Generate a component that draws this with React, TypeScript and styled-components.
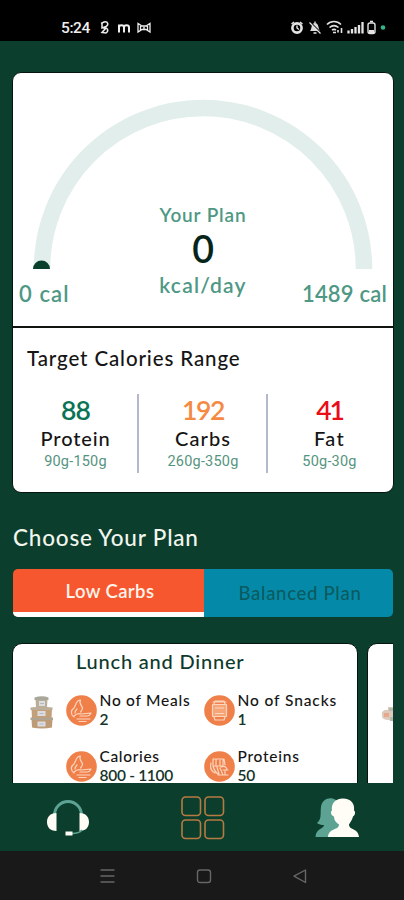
import React from "react";
import styled, { createGlobalStyle } from "styled-components";

const Global = createGlobalStyle`
  * { box-sizing: border-box; }
  body { margin: 0; background: #0b3e2c; font-family: Lato, sans-serif; font-weight: 500; }
`;

const Screen = styled.div`
  width: 404px;
  height: 900px;
  display: flex;
  flex-direction: column;
  overflow: hidden;
  background: #0b3e2c;
`;

const StatusBar = styled.header`
  height: 41px;
  flex: none;
  display: flex;
  justify-content: space-between;
  padding: 18px 17px 0 61px;
  background: #000;
  color: #eee;
`;

const Clock = styled.span`
  font: 500 15.5px/20px Roboto, sans-serif;
  letter-spacing: -0.4px;
  margin-right: 9px;
`;

const StatusGroup = styled.div`
  display: flex;
`;

const Main = styled.main`
  flex: 1;
  min-height: 0;
  overflow: hidden;
  padding: 31px 11px 0 12px;
`;

const Text = styled.div<{ $size: number; $line: number; $gap?: number; $color?: string; $weight?: number }>`
  font-size: ${(p) => p.$size}px;
  line-height: ${(p) => p.$line}px;
  letter-spacing: ${(p) => p.$gap ?? 0}px;
  color: ${(p) => p.$color ?? "#151515"};
  font-weight: ${(p) => p.$weight ?? 500};
  white-space: nowrap;
`;

const SummaryCard = styled.section`
  height: 421px;
  width: 382px;
  background: #fff;
  border: 1px solid #06160f;
  border-radius: 9px;
  overflow: hidden;
`;

const Gauge = styled.div`
  display: grid;
  height: 253px;
  > * { grid-area: 1 / 1; }
`;

const GaugeCenter = styled.div`
  padding-top: 130px;
  text-align: center;
`;

const GaugeEnds = styled.div`
  align-self: end;
  display: flex;
  justify-content: space-between;
  padding: 0 6px 18px;
`;

const TargetPanel = styled.div`
  border-top: 2px solid #10160f;
  padding-top: 16px;
`;

const TargetTitle = styled(Text)`
  padding-left: 14px;
`;

const Stats = styled.div`
  display: grid;
  grid-template-columns: 126px 129px 1fr;
  margin-top: 22px;
  height: 79px;
`;

const Stat = styled.div`
  text-align: center;
  padding: 1px 0 0 1px;
  border-right: 2px solid #b4b8cc;
  &:last-child { border-right: 0; padding-right: 3px; }
`;

const Range = styled.div`
  font: 400 14.5px/20px Roboto, sans-serif;
  letter-spacing: 0.2px;
  padding-top: 1px;
  color: #56947f;
`;

const SectionTitle = styled(Text)`
  margin: 31px 0 0 1px;
`;

const Tabs = styled.div`
  display: grid;
  grid-template-columns: 191px 1fr;
  height: 48px;
  width: 380px;
  margin: 17px 0 0 1px;
  border-radius: 5px;
  overflow: hidden;
`;

const Tab = styled.button<{ $active?: boolean }>`
  border: 0;
  border-bottom: ${(p) => (p.$active ? "5px solid #fff" : "0")};
  padding: 0 0 0 3px;
  background: ${(p) => (p.$active ? "#f6572e" : "#048aa8")};
  color: ${(p) => (p.$active ? "#fff3ea" : "#0b5a60")};
  font: ${(p) => (p.$active ? 600 : 500)} 18.5px Lato, sans-serif;
  letter-spacing: ${(p) => (p.$active ? 0.4 : 0.7)}px;
`;

const Plans = styled.div`
  display: flex;
  gap: 9px;
  width: 381px;
  margin-top: 26px;
  overflow: hidden;
`;

const PlanCard = styled.article`
  flex: none;
  width: 346px;
  height: 180px;
  background: #fff;
  border: 1px solid #06160f;
  border-radius: 10px;
`;

const PlanTitle = styled(Text)`
  padding: 4px 0 0 63px;
`;

const PlanBody = styled.div`
  display: grid;
  grid-template-columns: 36px 138px 1fr;
  padding: 17px 0 0 17px;
`;

const NextBody = styled.div`
  padding: 58px 0 0 13px;
`;

const Facts = styled.div`
  display: grid;
  gap: 18px;
`;

const Fact = styled.div`
  display: flex;
  gap: 2.5px;
  height: 38px;
  > svg { margin-top: 4px; flex: none; }
`;

const NavBar = styled.nav`
  height: 68px;
  flex: none;
  display: flex;
  justify-content: space-between;
  padding: 13px 45px 0 46px;
`;

const SystemBar = styled.footer`
  height: 49px;
  flex: none;
  display: flex;
  justify-content: space-between;
  padding: 16px 96px 0 99px;
  background: #191919;
`;

const GREEN = "#4f9885";

const MealIcon = () => (
  <g>
    <path d="M8 22c-4-3-3-7 0-9l1.500-3c1-3 3-5 5-5-2 3 1 5 2 8 0 2-1 3-2 4" />
    <path d="M9 18c0-2 1-3 2-4M8 21c2-2 4-3 7-2l10-1c-1 2-2 3-4 3h-7M11 24h13M13 26.500h7" />
  </g>
);
const SnackIcon = () => (
  <g>
    <rect x="8.500" y="9.500" width="14" height="12" rx="0.500" fill="#f5a577" />
    <path d="M9 7h13M10 9l1-3h9l1 3M10 22l1 3h9l1-3M11.500 13h8M11.500 18.500h8" />
  </g>
);
const ProteinIcon = () => (
  <g>
    <path d="M9 8h10v7H9zM12 8v7M16 9v5M7 12c-1 4 0 8 4 10M9 15c1 4 2 6 5 8M13 16l2 7M17 16c4-2 6 1 6 3M16 17l3 7M14 24h10M19 19h5M20 8l1 6M21 19v5" />
  </g>
);

const Disc = ({ children }: { children: React.ReactNode }) => (
  <svg width="31" height="31" viewBox="0 0 31 31" fill="none" stroke="#fbd5bd" strokeWidth="1.2" strokeLinecap="round" strokeLinejoin="round">
    <circle cx="15.5" cy="15.5" r="15.3" fill="#f0804a" stroke="none" />
    {children}
  </svg>
);

const Boxes = () => (
  <svg width="24" height="34" viewBox="0 0 24 34">
    <path d="M5.500 3h12l-.5 10H6z" fill="#b9ae98" />
    <path d="M4.500 2.500Q12 0 18.500 2.500V5h-14z" fill="#a9a79a" />
    <path d="M1.500 13.500h20.500l-.5 10h-19.500z" fill="#c3a078" />
    <path d="M.5 12.500Q12 11 22.500 12.500V15H.5z" fill="#bcae99" />
    <path d="M1.500 24h21l-.5 8.500q-10 2-20 0z" fill="#bd9b76" />
    <path d="M.5 22.500h22.500V25H.5z" fill="#b0a390" />
    <path d="M9 6h6v5H9zM7.500 16h8v5h-8zM7.500 26.500h8v5h-8z" fill="#dcdde0" />
    <path d="M10 8.500h4M9.500 18.500h4M9.500 29h4" stroke="#b4b8c0" />
  </svg>
);

const FACTS: { name: string; value: string; gap: number; icon: React.ReactNode }[][] = [
  [
    { name: "No of Meals", value: "2", gap: 0.75, icon: <MealIcon /> },
    { name: "Calories", value: "800 - 1100", gap: 0.65, icon: <MealIcon /> },
  ],
  [
    { name: "No of Snacks", value: "1", gap: 0.9, icon: <SnackIcon /> },
    { name: "Proteins", value: "50", gap: 0.75, icon: <ProteinIcon /> },
  ],
];

const STATS = [
  { value: "88", name: "Protein", range: "90g-150g", color: "#0b7355", gap: -0.9, nameGap: 0.85 },
  { value: "192", name: "Carbs", range: "260g-350g", color: "#f58a43", gap: -1.4, nameGap: 1.1 },
  { value: "41", name: "Fat", range: "50g-30g", color: "#ea0c16", gap: -2.2, nameGap: 1.3 },
];

export default function App() {
  return (
    <Screen>
      <Global />
      <StatusBar>
        <StatusGroup>
          <Clock>5:24</Clock>
          <svg width="54" height="20" viewBox="0 0 54 20" fill="none" stroke="#eee" strokeWidth="1.5">
            <path d="M2 5.500l3-1.500c4-1 5 3 2 4.500l-4 1.500V5.500M4 10c5-1 6 3 3 5l-4-.5 4-4.500" />
            <path d="M20 14.500V6.500M20 9.500c0-3 5-3 5 0v5M25 9.500c0-3 5-3 5 0v5" strokeWidth="2" />
            <path d="M39 5.500v8.500l4-2.500h4l4 2.500V5.500L47 8h-4zM41.500 8v4M48.500 8v4M44 9.800h2" strokeWidth="1.300" />
          </svg>
        </StatusGroup>
        <svg width="98" height="20" viewBox="0 0 98 20" fill="none" stroke="#e4e4e4">
          <circle cx="8" cy="10" r="4.600" strokeWidth="2.600" />
          <path d="M8 7.500V10l2 1.500M2.500 6l2.500-2M13.500 6L11 4" strokeWidth="1.400" />
          <path d="M21 13c2-2 1-8 5-8s3 6 5 8z" fill="#ddd" stroke="none" />
          <path d="M24.500 15h3M26 3.500V5" strokeWidth="1.400" />
          <path d="M21 4l11 11" stroke="#000" strokeWidth="1.600" />
          <path d="M20.500 4.500l11 11" strokeWidth="1.200" />
          <path d="M38 6.500c4-4 10-4 14 0M40.500 9.500c3-2.500 6-2.500 9 0M43 12c1.500-1 2.500-1 4 0M44 14.500h3M49 14.500v-2.500M52.500 15v-5" strokeWidth="1.600" />
          <path d="M59.500 15.500v-3M63 15.500v-4.500M66.500 15.500v-6.500M70 15.500v-8.500M73.500 15.500V4" strokeWidth="2.300" />
          <rect x="79" y="5" width="7" height="10.500" rx="2" strokeWidth="1.400" />
          <path d="M81 3.500h3" strokeWidth="1.600" />
          <path d="M80 12h5v3h-5z" fill="#e4e4e4" stroke="none" />
          <circle cx="94" cy="9.500" r="2.300" fill="#35b48b" stroke="none" />
        </svg>
      </StatusBar>

      <Main>
        <SummaryCard>
          <Gauge>
            <svg width="380" height="196" viewBox="0 0 380 196">
              <path d="M29 196a161 161 0 0 1 322 0" fill="none" stroke="#e1eeeb" strokeWidth="16.500" />
              <circle cx="28.500" cy="196" r="8.500" fill="#08402b" />
            </svg>
            <GaugeCenter>
              <Text $size={19} $line={24} $gap={0.85} $weight={600} $color={GREEN}>Your Plan</Text>
              <Text $size={37.5} $line={44} $weight={600} $color="#06251a">0</Text>
              <Text $size={21} $line={28} $gap={1.2} $weight={600} $color={GREEN}>kcal/day</Text>
            </GaugeCenter>
            <GaugeEnds>
              <Text $size={22} $line={28} $gap={1.1} $weight={600} $color={GREEN}>0 cal</Text>
              <Text $size={22} $line={28} $gap={0.2} $weight={600} $color={GREEN}>1489 cal</Text>
            </GaugeEnds>
          </Gauge>
          <TargetPanel>
            <TargetTitle $size={20.5} $line={28} $gap={0.88}>Target Calories Range</TargetTitle>
            <Stats>
              {STATS.map((s) => (
                <Stat key={s.name}>
                  <Text $size={26.5} $line={30} $gap={s.gap} $weight={600} $color={s.color}>{s.value}</Text>
                  <Text $size={20} $line={26} $gap={s.nameGap}>{s.name}</Text>
                  <Range>{s.range}</Range>
                </Stat>
              ))}
            </Stats>
          </TargetPanel>
        </SummaryCard>

        <SectionTitle $size={22.5} $line={28} $gap={0.8} $weight={500} $color="#f2f6ef">Choose Your Plan</SectionTitle>
        <Tabs>
          <Tab $active>Low Carbs</Tab>
          <Tab>Balanced Plan</Tab>
        </Tabs>

        <Plans>
          <PlanCard>
            <PlanTitle $size={20} $line={26} $gap={0.8} $color="#0d3a2c">Lunch and Dinner</PlanTitle>
            <PlanBody>
              <Fact><Boxes /></Fact>
              {FACTS.map((column) => (
                <Facts key={column[0].name}>
                  {column.map((f) => (
                    <Fact key={f.name}>
                      <Disc>{f.icon}</Disc>
                      <div>
                        <Text $size={15.5} $line={19} $gap={f.gap}>{f.name}</Text>
                        <Text $size={15.5} $line={19} $gap={-0.3} $weight={600} $color="#15352a">{f.value}</Text>
                      </div>
                    </Fact>
                  ))}
                </Facts>
              ))}
            </PlanBody>
          </PlanCard>
          <PlanCard>
            <NextBody>
              <svg width="24" height="26" viewBox="0 0 24 26">
                <path d="M1 10q3-3 6-2V5h14v15q-10 0-13-2-7 0-7-4z" fill="#dccabc" />
                <path d="M3 11h5v4H3z" fill="#e7a88c" />
                <path d="M8 6h5v3H8zM9 15h4v4H9z" fill="#b8b9ae" />
              </svg>
            </NextBody>
          </PlanCard>
        </Plans>
      </Main>

      <NavBar>
        <svg width="44" height="44" viewBox="0 0 44 44">
          <path d="M8.500 19a13.500 13.500 0 0 1 27 0" fill="none" stroke="#5da393" strokeWidth="3" />
          <path d="M10.500 17v18C4 35 1 31 1 26s3-9 9.500-9zM33.500 17v18c6.500 0 9.500-4 9.500-9s-3-9-9.500-9z" fill="#fffdf5" />
          <path d="M36 34q-3 3.500-10 3.500" fill="none" stroke="#5da393" strokeWidth="1.700" />
          <rect x="19.500" y="35.500" width="7" height="4" fill="#fffdf5" />
        </svg>
        <svg width="44" height="44" viewBox="0 0 44 44" fill="none" stroke="#b67b43" strokeWidth="1.600">
          <rect x="1" y="1" width="18.500" height="18.500" rx="3.500" />
          <rect x="24" y="1" width="18.500" height="18.500" rx="3.500" />
          <rect x="1" y="24" width="18.500" height="18.500" rx="3.500" />
          <rect x="24" y="24" width="18.500" height="18.500" rx="3.500" />
        </svg>
        <svg width="44" height="44" viewBox="0 0 44 44">
          <path d="M21 4c-6-4-14-1-15 7-1 7 1 12-4 16 2 1.500 4 2 7 2 0 4-8 3-8.500 12H26z" fill="#5da393" />
          <path d="M28 2.500c8 0 12 5 11 12 2 1 1 5-1 6-1 4-3 6-4 8 0 6 9 3 10 12.500H13c1-9.500 11-6.500 11-12.500-3-2-5-4-5-8-3-1-4-5-2-6-1-7 3-12 11-12z" fill="#fffdf5" />
        </svg>
      </NavBar>
      <SystemBar>
        <svg width="17" height="18" viewBox="0 0 17 18" stroke="#666" strokeWidth="1.400">
          <path d="M1.500 3h14M1.500 9h14M1.500 15h14" />
        </svg>
        <svg width="16" height="18" viewBox="0 0 16 18" fill="none" stroke="#666" strokeWidth="1.400">
          <rect x="1.500" y="3" width="13" height="12.500" rx="2.500" />
        </svg>
        <svg width="16" height="18" viewBox="0 0 16 18" fill="none" stroke="#666" strokeWidth="1.400" strokeLinejoin="round">
          <path d="M13.500 3v12.500L2 9.200z" />
        </svg>
      </SystemBar>
    </Screen>
  );
}
